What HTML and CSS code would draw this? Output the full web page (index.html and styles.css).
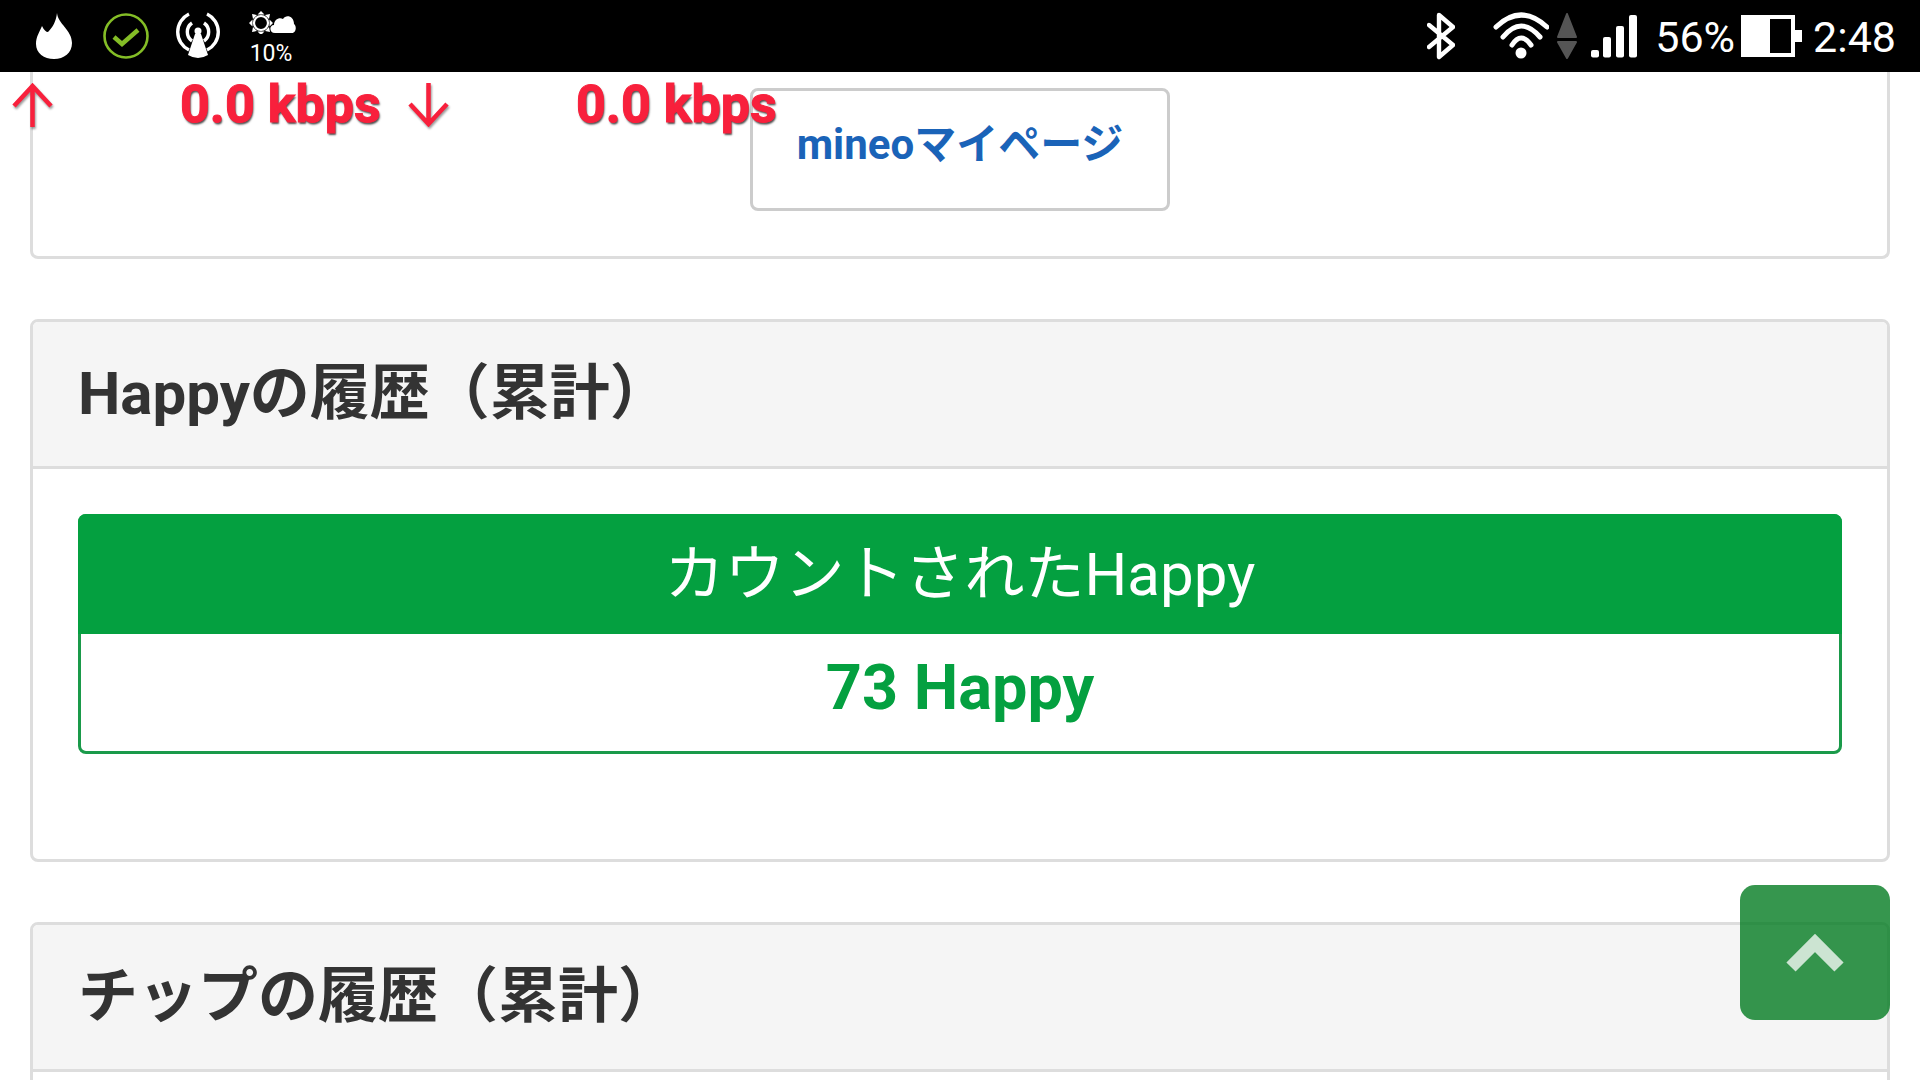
FILE: index.html
```html
<!DOCTYPE html>
<html lang="ja">
<head>
  <meta charset="UTF-8">
  <title>Happyの履歴</title>
  <link rel="stylesheet" href="styles.css">
</head>
<body>
  <div class="status-bar">
    <div class="status-left">
      <svg class="st-flame" viewBox="32 0 44 72"><path fill="#fff" d="M57 13 C58 24 72 30 72 43 C72 53 64 59 54 59 C44 59 36 53 36 44 C36 37 39 33 42 26 C44 30 46 32 48 32 C53 27 56 21 57 13Z"/></svg>
      <svg class="st-check" viewBox="100 0 52 72" fill="none" stroke="#84bd26"><circle cx="126" cy="36" r="21.5" stroke-width="2.6"/><path d="M114 37 L122 44 L138 30" stroke-width="4.5"/></svg>
      <svg class="st-antenna" viewBox="176 0 46 72" fill="none" stroke="#fff" stroke-width="3.4">
        <path d="M189 14 A20 20 0 0 0 189 50"/>
        <path d="M207 14 A20 20 0 0 1 207 50"/>
        <path d="M192 23 A11 11 0 0 0 192 41"/>
        <path d="M204 23 A11 11 0 0 1 204 41"/>
        <circle cx="198" cy="31" r="3.5" fill="#fff" stroke="none"/>
        <path d="M195 34 L201 34 L208 55 Q198 61 188 55Z" fill="#fff" stroke="none"/>
      </svg>
      <div class="st-weather">
        <svg viewBox="247 10 48 24" width="48" height="24">
          <circle cx="260" cy="23" r="7" fill="none" stroke="#fff" stroke-width="2.2"/>
          <path d="M260 11 L263.5 14.5 H256.5Z M260 35 L263.5 31.5 H256.5Z M248 23 L251.5 19.5 V26.5Z M272 23 L268.5 19.5 V26.5Z M251 14 L256 15 L252 19Z M269 14 L264 15 L268 19Z M251 32 L256 31 L252 27Z M269 32 L264 31 L268 27Z" fill="#fff"/>
          <path d="M274 33 C268 33 268 25 273 25 C273 20 278 17 282 19 C285 14 293 16 293 24 C296 26 295 33 291 33Z" fill="#fff"/>
        </svg>
        <span>10%</span>
      </div>
    </div>
    <div class="status-right">
      <svg class="st-bt" viewBox="1427 0 28 72" fill="none" stroke="#fff" stroke-width="4.4" stroke-linejoin="round" stroke-linecap="round"><path d="M1429 25 L1453 45 L1439 57 L1439 15 L1453 27 L1429 47"/></svg>
      <svg class="st-wifi" viewBox="1493 0 56 72" fill="none" stroke="#fff" stroke-width="5" stroke-linecap="round">
        <path d="M1496 27 Q1521 3 1547 27"/>
        <path d="M1503 37 Q1521 15 1540 37"/>
        <path d="M1512 45 Q1521 31 1531 45"/>
        <circle cx="1521" cy="53" r="5.5" fill="#fff" stroke="none"/>
      </svg>
      <svg class="st-updown" viewBox="1557 0 20 72" fill="#555" stroke="#555" stroke-width="2" stroke-linejoin="round"><path d="M1567 14 L1576 37 H1558Z"/><path d="M1567 58 L1576 42 H1558Z"/></svg>
      <svg class="st-signal" viewBox="1591 0 46 72" fill="#fff">
        <rect x="1591" y="50" width="8" height="7.5" rx="2"/>
        <rect x="1603" y="37" width="8" height="20.5" rx="2"/>
        <rect x="1616" y="26" width="8" height="31.5" rx="2"/>
        <rect x="1629" y="15" width="8" height="42.5" rx="2"/>
      </svg>
      <span class="st-percent">56%</span>
      <svg class="st-battery" viewBox="1741 0 61 72" fill="#fff"><path fill-rule="evenodd" d="M1741 15 H1795 V30 H1802 V42 H1795 V57 H1741Z M1770 19 V53 H1791 V19Z"/></svg>
      <span class="st-time">2:48</span>
    </div>
  </div>

  <div class="speed-overlay">
    <div class="speed-item">
      <svg class="speed-arrow" viewBox="0 0 41 44" fill="none" stroke="#f8203c" stroke-width="4.5"><path d="M2 23 L20.5 3 L39 23 M20.5 3 V44"/></svg>
      <span class="speed-value">0.0 kbps</span>
    </div>
    <div class="speed-item">
      <svg class="speed-arrow" viewBox="0 0 41 44" fill="none" stroke="#f8203c" stroke-width="4.5"><path d="M2 21 L20.5 41 L39 21 M20.5 41 V0"/></svg>
      <span class="speed-value">0.0 kbps</span>
    </div>
  </div>

  <div class="content">
    <div class="card card-cut">
      <div class="mypage-row">
        <a class="mypage-btn">mineoマイページ</a>
      </div>
    </div>

    <div class="card">
      <div class="card-header">Happyの履歴（累計）</div>
      <div class="card-body">
        <div class="count-box">
          <div class="count-title">カウントされたHappy</div>
          <div class="count-value">73 Happy</div>
        </div>
      </div>
    </div>

    <div class="card">
      <div class="card-header">チップの履歴（累計）</div>
      <div class="card-body"></div>
    </div>
  </div>

  <a class="back-top">
    <svg viewBox="0 0 60 40" width="60" height="40" fill="none" stroke="rgba(255,255,255,0.75)" stroke-width="13"><path d="M6 34 L30 10 L54 34"/></svg>
  </a>
</body>
</html>
```

FILE: styles.css
```css
html, body {
  margin: 0;
  padding: 0;
  height: 1080px;
  overflow: hidden;
}

body {
  position: relative;
  background-color: #fff;
  font-family: Roboto, "Noto Sans CJK JP", sans-serif;
  color: #333;
}

/* Status bar */
.status-bar {
  display: flex;
  justify-content: space-between;
  height: 72px;
  background-color: #000;
  color: #fff;
}

.status-left {
  display: flex;
  gap: 24px;
  padding-left: 32px;
}

.status-right {
  display: flex;
  align-items: center;
  padding-right: 24px;
}

.status-bar svg {
  display: block;
  height: 72px;
}

.st-flame { width: 44px; }
.st-check { width: 52px; }
.st-antenna { width: 46px; }

.st-weather {
  display: flex;
  flex-direction: column;
  align-items: center;
  width: 52px;
  padding-top: 10px;
}

.st-weather svg {
  height: 24px;
}

.st-weather span {
  font-size: 23px;
  line-height: 26px;
  margin-top: 7px;
  margin-left: -2px;
}

.st-bt { width: 28px; margin-right: 38px; }
.st-wifi { width: 56px; margin-right: 8px; }
.st-updown { width: 20px; margin-right: 14px; }
.st-signal { width: 46px; margin-right: 18px; }
.st-battery { width: 61px; margin-left: 6px; margin-right: 11px; }

.st-percent,
.st-time {
  font-size: 43px;
  line-height: 76px;
  padding-top: 2px;
}

/* Overlay from the speed meter app */
.speed-overlay {
  position: absolute;
  top: 72px;
  left: 12px;
  display: flex;
  z-index: 5;
}

.speed-item {
  display: flex;
  width: 396px;
  height: 70px;
}

.speed-arrow {
  width: 41px;
  height: 44px;
  margin-top: 11px;
  margin-right: 127px;
  filter: drop-shadow(1px 2px 1px rgba(0, 0, 0, 0.4));
}

.speed-value {
  font-size: 52px;
  font-weight: 700;
  line-height: 66px;
  color: #f8203c;
  -webkit-text-stroke: 1px #f8203c;
  text-shadow: 1px 2px 2px rgba(0, 0, 0, 0.7);
  white-space: nowrap;
}

/* Cards */
.content {
  display: flex;
  flex-direction: column;
  gap: 60px;
  padding: 0 30px;
}

.card {
  border: 3px solid #ddd;
  border-radius: 8px;
  background-color: #fff;
}

.card-cut {
  border-top: none;
  border-radius: 0 0 8px 8px;
}

.mypage-row {
  display: flex;
  justify-content: center;
  padding: 16px 0 45px;
}

.mypage-btn {
  box-sizing: border-box;
  width: 420px;
  height: 123px;
  padding-top: 22px;
  border: 3px solid #ccc;
  border-radius: 8px;
  text-align: center;
  font-size: 42px;
  font-weight: 700;
  line-height: 63px;
  color: #1a63b8;
}

.card-header {
  height: 144px;
  padding: 0 45px;
  border-bottom: 3px solid #ddd;
  border-radius: 5px 5px 0 0;
  background-color: #f5f5f5;
  font-size: 60px;
  font-weight: 700;
  line-height: 144px;
}

.card-body {
  padding: 45px 45px 105px;
}

.count-box {
  border-radius: 8px;
  border: 3px solid #1a9a4a;
  text-align: center;
  font-size: 60px;
}

.count-title {
  height: 120px;
  margin: -3px -3px 0;
  border-radius: 8px 8px 0 0;
  background-color: #04a040;
  color: #fff;
  line-height: 122px;
}

.count-value {
  height: 117px;
  font-size: 63px;
  font-weight: 700;
  line-height: 108px;
  color: #04a040;
}

/* Back to top */
.back-top {
  position: absolute;
  right: 30px;
  bottom: 60px;
  display: flex;
  align-items: center;
  justify-content: center;
  width: 150px;
  height: 135px;
  border-radius: 15px;
  background-color: rgba(4, 124, 34, 0.8);
}
```
